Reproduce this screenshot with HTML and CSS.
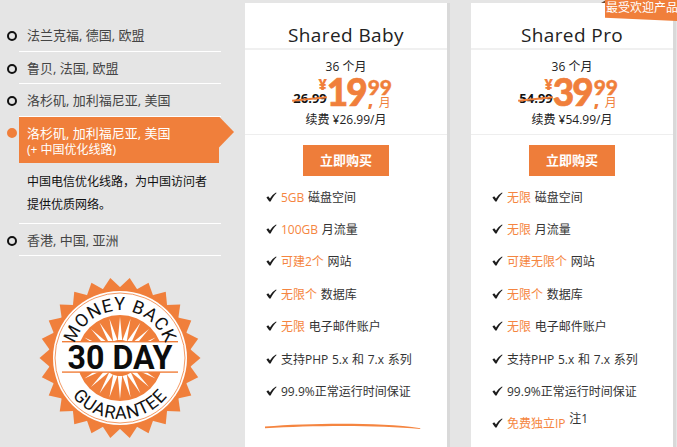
FILE: index.html
```html
<!DOCTYPE html>
<html lang="zh">
<head>
<meta charset="utf-8">
<title>Shared Hosting</title>
<link rel="stylesheet" href="styles.css">
</head>
<body>
<svg class="defs" width="0" height="0" aria-hidden="true">
  <defs>
    <symbol id="check" viewBox="0 0 11 10"><path d="M0.4 5.6 L2.2 4.2 L4 6.4 C5.5 4 7.6 1.9 10 0.5 L10.6 1 C8.3 3.2 6.3 6 4.6 9.6 L3.3 9.6 Z" fill="#1c1c1c"/></symbol>
  </defs>
</svg>
<div class="page">
  <aside class="sidebar">
    <ul class="locations">
      <li class="loc"><span class="dot"></span><div class="loc-body"><div class="loc-name">法兰克福, 德国, 欧盟</div></div></li>
      <li class="loc"><span class="dot"></span><div class="loc-body"><div class="loc-name">鲁贝, 法国, 欧盟</div></div></li>
      <li class="loc"><span class="dot"></span><div class="loc-body"><div class="loc-name">洛杉矶, 加利福尼亚, 美国</div></div></li>
      <li class="loc loc-active"><span class="dot dot-active"></span><div class="loc-body">
        <div class="loc-flag">洛杉矶, 加利福尼亚, 美国<br><span class="loc-sub">(+ 中国优化线路)</span></div>
        <p class="loc-desc">中国电信优化线路，为中国访问者<br>提供优质网络。</p>
      </div></li>
      <li class="loc"><span class="dot"></span><div class="loc-body"><div class="loc-name">香港, 中国, 亚洲</div></div></li>
    </ul>
    <svg class="badge" width="164" height="164" viewBox="-82 -82 164 164">
      <defs>
        <polygon id="spike" points="0,-80.5 8.9,-70 -8.9,-70"/>
        <polygon id="ray" points="0,-41 2.2,-18 -2.2,-18"/>
        <path id="arc-top" d="M-47.5 0 A47.5 47.5 0 0 1 47.5 0"/>
        <path id="arc-bottom" d="M-61 0 A61 61 0 0 0 61 0"/>
      </defs>
      <g class="badge-orange">
        <circle r="71"/>
        <use href="#spike" transform="rotate(6.92)"/><use href="#spike" transform="rotate(20.77)"/><use href="#spike" transform="rotate(34.62)"/><use href="#spike" transform="rotate(48.46)"/><use href="#spike" transform="rotate(62.31)"/><use href="#spike" transform="rotate(76.15)"/><use href="#spike" transform="rotate(90)"/><use href="#spike" transform="rotate(103.85)"/><use href="#spike" transform="rotate(117.69)"/><use href="#spike" transform="rotate(131.54)"/><use href="#spike" transform="rotate(145.38)"/><use href="#spike" transform="rotate(159.23)"/><use href="#spike" transform="rotate(173.08)"/><use href="#spike" transform="rotate(186.92)"/><use href="#spike" transform="rotate(200.77)"/><use href="#spike" transform="rotate(214.62)"/><use href="#spike" transform="rotate(228.46)"/><use href="#spike" transform="rotate(242.31)"/><use href="#spike" transform="rotate(256.15)"/><use href="#spike" transform="rotate(270)"/><use href="#spike" transform="rotate(283.85)"/><use href="#spike" transform="rotate(297.69)"/><use href="#spike" transform="rotate(311.54)"/><use href="#spike" transform="rotate(325.38)"/><use href="#spike" transform="rotate(339.23)"/><use href="#spike" transform="rotate(353.08)"/>
      </g>
      <circle r="67" class="badge-white"/>
      <circle r="65" class="badge-ring"/>
      <circle r="43" class="badge-orange"/>
      <g class="badge-white">
        <use href="#ray"/><use href="#ray" transform="rotate(15)"/><use href="#ray" transform="rotate(30)"/><use href="#ray" transform="rotate(45)"/><use href="#ray" transform="rotate(60)"/><use href="#ray" transform="rotate(-15)"/><use href="#ray" transform="rotate(-30)"/><use href="#ray" transform="rotate(-45)"/><use href="#ray" transform="rotate(-60)"/><use href="#ray" transform="rotate(180)"/><use href="#ray" transform="rotate(165)"/><use href="#ray" transform="rotate(150)"/><use href="#ray" transform="rotate(135)"/><use href="#ray" transform="rotate(120)"/><use href="#ray" transform="rotate(195)"/><use href="#ray" transform="rotate(210)"/><use href="#ray" transform="rotate(225)"/><use href="#ray" transform="rotate(240)"/>
      </g>
      <rect class="badge-white" x="-58" y="-16" width="116" height="30"/>
      <rect class="badge-orange" x="-58" y="-17" width="116" height="1.4"/>
      <rect class="badge-orange" x="-58" y="13.4" width="116" height="1.4"/>
      <text class="badge-big" x="0" y="11" text-anchor="middle" textLength="105" lengthAdjust="spacingAndGlyphs">30 DAY</text>
      <text class="badge-arc"><textPath href="#arc-top" startOffset="50%" text-anchor="middle">MONEY BACK</textPath></text>
      <text class="badge-arc"><textPath href="#arc-bottom" startOffset="50%" text-anchor="middle">GUARANTEE</textPath></text>
    </svg>
  </aside>

  <main class="plans">
    <section class="plan">
      <h2 class="plan-title">Shared Baby</h2>
      <div class="plan-price">
        <div class="term">36 个月</div>
        <div class="price">
          <span class="old">26.99</span>
          <span class="yen">¥</span>
          <span class="big">19</span>
          <span class="cents"><span class="cents-num">99</span><span class="per"><i class="point">,</i>月</span></span>
        </div>
        <div class="renew">续费 ¥26.99/月</div>
      </div>
      <div class="plan-buy"><a class="buy" href="#">立即购买</a></div>
      <ul class="features">
        <li><svg class="check"><use href="#check"/></svg><span><em>5GB</em> 磁盘空间</span></li>
        <li><svg class="check"><use href="#check"/></svg><span><em>100GB</em> 月流量</span></li>
        <li><svg class="check"><use href="#check"/></svg><span><em>可建2个</em> 网站</span></li>
        <li><svg class="check"><use href="#check"/></svg><span><em>无限个</em> 数据库</span></li>
        <li><svg class="check"><use href="#check"/></svg><span><em>无限</em> 电子邮件账户</span></li>
        <li><svg class="check"><use href="#check"/></svg><span>支持PHP 5.x 和 7.x 系列</span></li>
        <li><svg class="check"><use href="#check"/></svg><span>99.9%正常运行时间保证</span></li>
        <li class="swoosh-row"><svg class="swoosh" width="158" height="8" viewBox="0 0 158 8"><path d="M1 4.6 C50 1 115 0.4 156.5 6.2 L156 7 C115 2.8 50 3.2 1 6.2 Z"/></svg></li>
      </ul>
    </section>

    <section class="plan">
      <span class="ribbon-fold"></span>
      <div class="ribbon">最受欢迎产品</div>
      <h2 class="plan-title">Shared Pro</h2>
      <div class="plan-price">
        <div class="term">36 个月</div>
        <div class="price">
          <span class="old">54.99</span>
          <span class="yen">¥</span>
          <span class="big">39</span>
          <span class="cents"><span class="cents-num">99</span><span class="per"><i class="point">,</i>月</span></span>
        </div>
        <div class="renew">续费 ¥54.99/月</div>
      </div>
      <div class="plan-buy"><a class="buy" href="#">立即购买</a></div>
      <ul class="features">
        <li><svg class="check"><use href="#check"/></svg><span><em>无限</em> 磁盘空间</span></li>
        <li><svg class="check"><use href="#check"/></svg><span><em>无限</em> 月流量</span></li>
        <li><svg class="check"><use href="#check"/></svg><span><em>可建无限个</em> 网站</span></li>
        <li><svg class="check"><use href="#check"/></svg><span><em>无限个</em> 数据库</span></li>
        <li><svg class="check"><use href="#check"/></svg><span><em>无限</em> 电子邮件账户</span></li>
        <li><svg class="check"><use href="#check"/></svg><span>支持PHP 5.x 和 7.x 系列</span></li>
        <li><svg class="check"><use href="#check"/></svg><span>99.9%正常运行时间保证</span></li>
        <li><svg class="check"><use href="#check"/></svg><span><em>免费独立IP</em> <sup class="note">注1</sup></span></li>
      </ul>
    </section>
  </main>
</div>
</body>
</html>
```

FILE: styles.css
```css
* { box-sizing: border-box; }
html, body { margin: 0; padding: 0; height: 447px; overflow: hidden; }
body {
  background: #e5e5e5;
  font-family: "Open Sans", "Noto Sans CJK SC", sans-serif;
  color: #333;
  font-size: 12px;
}
.defs { position: absolute; }
ul { list-style: none; margin: 0; padding: 0; }
.page { display: flex; height: 447px; }

/* sidebar */
.sidebar { width: 245px; flex: none; padding: 19px 24px 0 7px; }
.loc { display: flex; align-items: flex-start; }
.dot {
  flex: none;
  width: 10px;
  height: 10px;
  margin-top: 12px;
  margin-right: 2px;
  border: 2px solid #111;
  border-radius: 50%;
  background: #e5e5e5;
}
.dot-active { background: #f07f3b; border-color: #f07f3b; margin-top: 11.5px; }
.loc-body { width: 202px; border-bottom: 1px solid #fff; }
.loc-name {
  height: 31.5px;
  padding-left: 8px;
  font-size: 13px;
  line-height: 32px;
  color: #444;
}
.loc-flag {
  position: relative;
  width: 200px;
  height: 46.5px;
  padding: 8px 0 0 8px;
  background: #f07f3b;
  color: #fff;
  font-size: 13px;
  line-height: 16px;
}
.loc-flag::after {
  content: "";
  position: absolute;
  left: 200px;
  top: 0;
  width: 15px;
  height: 31px;
  background: #f07f3b;
  clip-path: polygon(0 0, 100% 50%, 0 100%);
}
.loc-sub { font-size: 12px; line-height: 14px; }
.loc-desc {
  margin: 0;
  padding: 6.5px 0 7px 8px;
  font-size: 12px;
  line-height: 23px;
  color: #111;
}
.badge { display: block; margin: 20px 0 0 31px; }
.badge-orange { fill: #f07f3b; }
.badge-white { fill: #fff; }
.badge-ring { fill: none; stroke: #f07f3b; stroke-width: 0.8; }
.badge-big { font-family: Roboto, sans-serif; font-weight: 700; font-size: 34px; fill: #0c0c0c; }
.badge-arc { font-family: Roboto, sans-serif; font-size: 18px; letter-spacing: 0.8px; fill: #111; }

/* plans */
.plans { display: flex; gap: 24px; padding-top: 3px; align-items: flex-start; }
.plan {
  position: relative;
  width: 202px;
  height: 470px;
  background: #fff;
  box-shadow: 3px 0 0 #d9d9d9;
}
.plan-title {
  margin: 0;
  height: 47px;
  padding-top: 17px;
  border-bottom: 2px solid #f0f0f0;
  font-size: 19px;
  font-weight: 400;
  line-height: 30px;
  letter-spacing: 0.4px;
  text-align: center;
  color: #222;
}
.plan-price {
  height: 85px;
  padding-top: 8px;
  border-bottom: 1px solid #eee;
  text-align: center;
}
.term { font-size: 12px; line-height: 18px; color: #222; }
.price { display: flex; justify-content: center; align-items: flex-start; height: 37px; margin: -2px 7px 0 0; }
.old {
  position: relative;
  margin-top: 15px;
  font-size: 13px;
  font-weight: 700;
  line-height: 18px;
  color: #111;
}
.old::after {
  content: "";
  position: absolute;
  left: -1px;
  right: -1px;
  top: 9px;
  height: 1.5px;
  background: #f07f3b;
  transform: rotate(-6deg);
}
.yen { font-size: 15px; font-weight: 800; line-height: 18px; margin: 1px -1px 0 -9px; color: #f07f3b; width: 10px; }
.big {
  font-family: Lato, "Open Sans", sans-serif;
  font-size: 37px;
  font-weight: 900;
  line-height: 36px;
  letter-spacing: -2px;
  -webkit-text-stroke: 0.7px #f07f3b;
  color: #f07f3b;
}
.cents { display: flex; flex-direction: column; width: 24px; margin: 3px 0 0 2px; color: #f07f3b; }
.cents-num { font-family: Lato, sans-serif; font-size: 21px; font-weight: 900; line-height: 19px; letter-spacing: 0; -webkit-text-stroke: 0.4px #f07f3b; }
.per { display: flex; justify-content: space-between; padding-right: 1px; font-size: 12px; line-height: 14px; font-weight: 400; }
.point { font-style: normal; font-weight: 800; font-size: 18px; line-height: 8px; }
.renew { font-size: 12px; line-height: 18px; color: #222; }
.plan-buy { padding-top: 10px; text-align: center; height: 47px; }
.buy {
  display: inline-block;
  width: 86px;
  height: 31px;
  background: #ee7d3a;
  color: #fff;
  font-size: 13px;
  font-weight: 700;
  line-height: 31px;
  text-decoration: none;
}
.features { padding-left: 21px; margin-top: -1.5px; }
.features li {
  display: flex;
  align-items: center;
  height: 32.4px;
  font-size: 12px;
  word-spacing: 0.6px;
  color: #333;
}
.check { width: 11px; height: 10px; margin-right: 4px; flex: none; }
.features em { font-style: normal; color: #f58540; }
.note { font-size: 12px; line-height: 0; vertical-align: 5px; }
.swoosh { display: block; margin: 5px 0 0 -2px; }
.swoosh path { fill: #f58540; }
.ribbon {
  position: absolute;
  top: -3px;
  right: -4px;
  width: 72px;
  height: 21px;
  padding-left: 1px;
  background: #f07f3b;
  color: #fff;
  font-size: 12px;
  line-height: 16px;
  white-space: nowrap;
  clip-path: polygon(0 0, 100% 0, 100% 100%, 0 84%);
}
.ribbon-fold {
  position: absolute;
  top: -3px;
  right: 67px;
  width: 5px;
  height: 3px;
  background: #6b4a35;
  clip-path: polygon(100% 0, 100% 100%, 0 100%);
}
```
